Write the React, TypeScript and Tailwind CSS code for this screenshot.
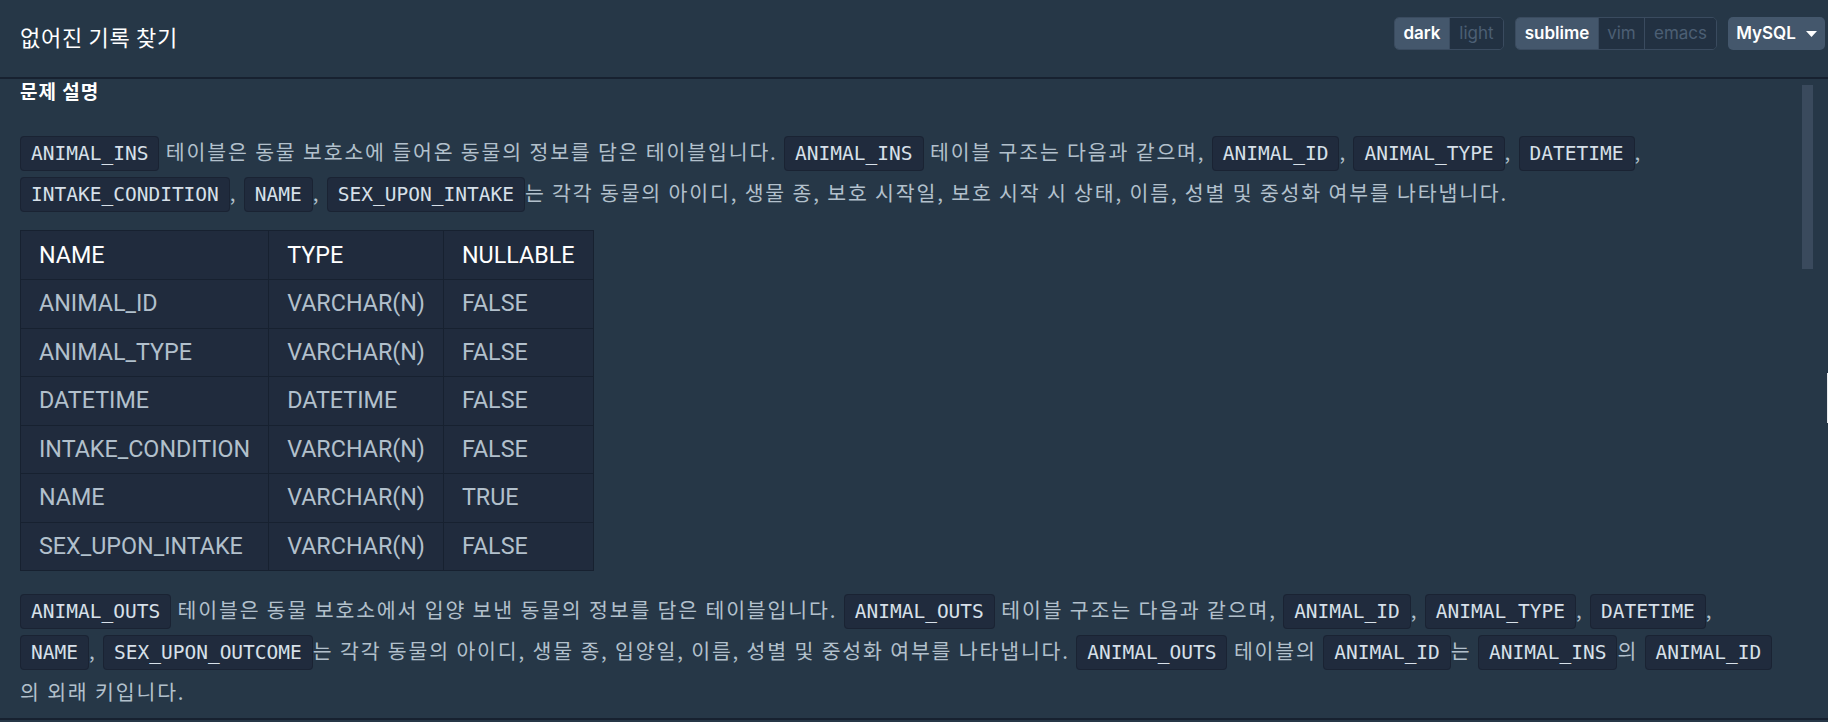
const SANS = "font-['Roboto','Noto_Sans_CJK_KR',sans-serif]";

const Code = ({ children }: { children: string }) => (
  <code className="rounded-[4px] border border-[#1a2333] bg-[#202b3d] px-[10px] py-[5px] font-['DejaVu_Sans_Mono',monospace] text-[19.5px] leading-none tracking-normal text-[#d7e0e9]">
    {children}
  </code>
);

const rows = [
  ["ANIMAL_ID", "VARCHAR(N)", "FALSE"],
  ["ANIMAL_TYPE", "VARCHAR(N)", "FALSE"],
  ["DATETIME", "DATETIME", "FALSE"],
  ["INTAKE_CONDITION", "VARCHAR(N)", "FALSE"],
  ["NAME", "VARCHAR(N)", "TRUE"],
  ["SEX_UPON_INTAKE", "VARCHAR(N)", "FALSE"],
];

type Seg = { label: string; w: string };

const Segmented = ({ items, active }: { items: Seg[]; active: number }) => (
  <div className="flex h-[33px] overflow-hidden rounded-[5px] border border-[#3a4b5f]">
    {items.map((it, i) => (
      <span
        key={it.label}
        className={
          i === active
            ? `flex items-center justify-center bg-[#44576c] text-[17px] font-semibold text-white ${it.w}`
            : `flex items-center justify-center border-l border-[#3a4b5f] bg-[#223142] text-[17px] text-[#4c5f74] ${it.w}`
        }
      >
        {it.label}
      </span>
    ))}
  </div>
);

export default function App() {
  return (
    <div className={`relative flex h-[722px] w-full flex-col overflow-hidden bg-[#263747] ${SANS}`}>
      <header className="flex h-[79px] shrink-0 items-start justify-between border-b-2 border-[#172130] pl-5 pr-[3px] pt-[17px]">
        <h1 className="mt-[3px] font-['Noto_Sans_CJK_KR',sans-serif] text-[22px] leading-[33px] font-normal tracking-[0.7px] text-white">
          없어진 기록 찾기
        </h1>
        <div className="flex items-center gap-[11px] font-['Inter','Noto_Sans',sans-serif]">
          <Segmented
            items={[
              { label: "dark", w: "w-[54px]" },
              { label: "light", w: "w-[54px]" },
            ]}
            active={0}
          />
          <Segmented
            items={[
              { label: "sublime", w: "w-[82px]" },
              { label: "vim", w: "w-[46px]" },
              { label: "emacs", w: "w-[72px]" },
            ]}
            active={0}
          />
          <button className="flex h-[33px] w-[97px] items-center justify-center gap-[10px] rounded-[5px] bg-[#44576c] text-[17px] font-semibold text-white">
            MySQL
            <svg width="11" height="6" viewBox="0 0 11 6">
              <path d="M0 0h11L5.5 6z" fill="#fff" />
            </svg>
          </button>
        </div>
      </header>

      <div className="flex min-h-0 flex-1">
        <div className="min-w-0 flex-1 overflow-hidden pl-5 pr-[24px]">
          <h2 className="font-['Noto_Sans_CJK_KR',sans-serif] text-[19px] leading-[24px] font-bold tracking-[1px] text-white">문제 설명</h2>

          <p className="mt-[28px] font-['Noto_Sans_CJK_KR',sans-serif] text-[20.5px] leading-[41px] tracking-[1.85px] text-[#b2c0cc]">
            <Code>ANIMAL_INS</Code> 테이블은 동물 보호소에 들어온 동물의 정보를 담은 테이블입니다. <Code>ANIMAL_INS</Code> 테이블 구조는 다음과 같으며, <Code>ANIMAL_ID</Code>, <Code>ANIMAL_TYPE</Code>, <Code>DATETIME</Code>, <Code>INTAKE_CONDITION</Code>, <Code>NAME</Code>, <Code>SEX_UPON_INTAKE</Code>는 각각 동물의 아이디, 생물 종, 보호 시작일, 보호 시작 시 상태, 이름, 성별 및 중성화 여부를 나타냅니다.
          </p>

          <table className="mt-[17px] border-collapse border border-[#172130] bg-[#202b3d] text-[23.3px]">
            <thead>
              <tr className="h-[49px]">
                <th className="border border-[#172130] px-[18px] text-left font-normal text-white">NAME</th>
                <th className="border border-[#172130] px-[18px] text-left font-normal text-white">TYPE</th>
                <th className="border border-[#172130] px-[18px] text-left font-normal text-white">NULLABLE</th>
              </tr>
            </thead>
            <tbody>
              {rows.map((r) => (
                <tr key={r[0]} className="h-[48.5px]">
                  {r.map((c, i) => (
                    <td key={i} className="border border-[#172130] px-[18px] text-[#b2c0cc]">
                      {c}
                    </td>
                  ))}
                </tr>
              ))}
            </tbody>
          </table>

          <p className="mt-[18px] font-['Noto_Sans_CJK_KR',sans-serif] text-[20.5px] leading-[41px] tracking-[1.85px] text-[#b2c0cc]">
            <Code>ANIMAL_OUTS</Code> 테이블은 동물 보호소에서 입양 보낸 동물의 정보를 담은 테이블입니다. <Code>ANIMAL_OUTS</Code> 테이블 구조는 다음과 같으며, <Code>ANIMAL_ID</Code>, <Code>ANIMAL_TYPE</Code>, <Code>DATETIME</Code>, <Code>NAME</Code>, <Code>SEX_UPON_OUTCOME</Code>는 각각 동물의 아이디, 생물 종, 입양일, 이름, 성별 및 중성화 여부를 나타냅니다. <Code>ANIMAL_OUTS</Code> 테이블의 <Code>ANIMAL_ID</Code>는 <Code>ANIMAL_INS</Code>의 <Code>ANIMAL_ID</Code>의 외래 키입니다.
          </p>
        </div>
        <div className="mr-[15px] w-[11px] shrink-0 pt-[6px]">
          <div className="h-[184px] bg-[#3a4a5d]" />
        </div>
      </div>

      <div className="h-[4px] shrink-0 border-t-2 border-[#172130]" />
      <div className="absolute right-0 top-[373px] h-[50px] w-[1px] bg-[#e6e9ec]" />
    </div>
  );
}
